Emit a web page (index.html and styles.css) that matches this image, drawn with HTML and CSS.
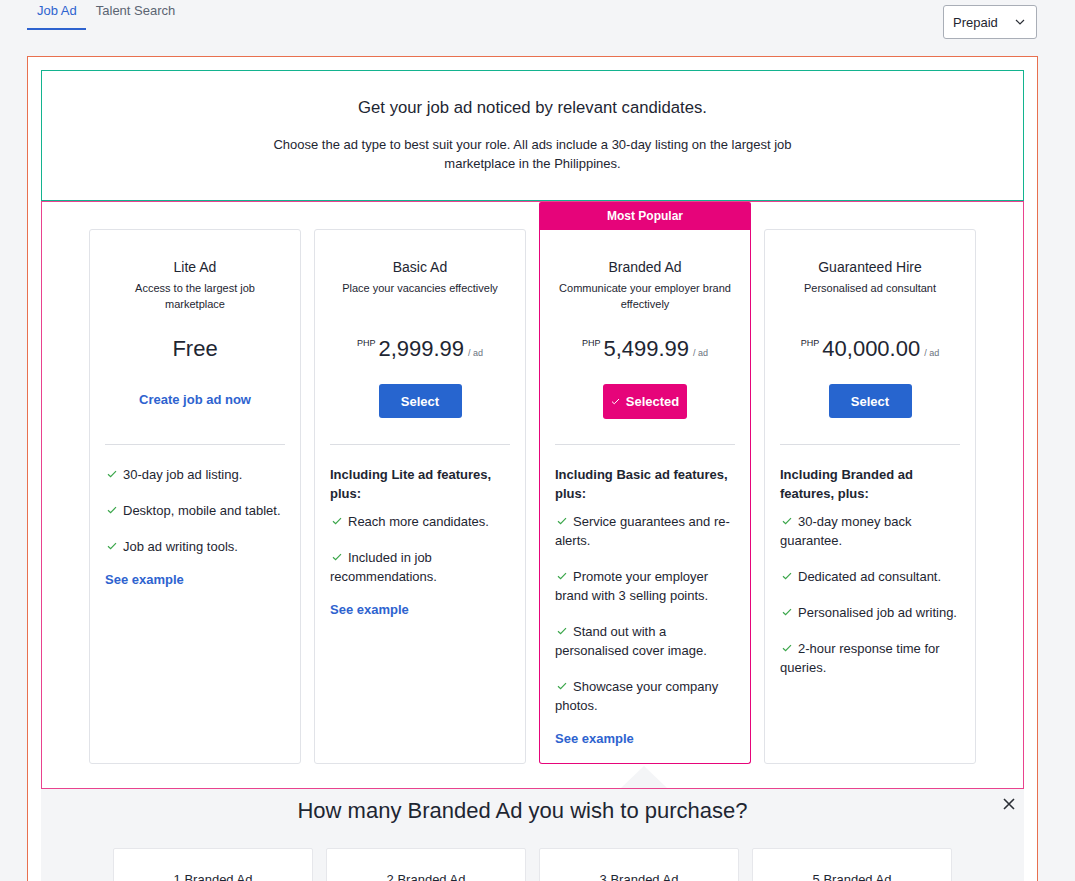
FILE: index.html
```html
<!DOCTYPE html>
<html lang="en">
<head>
<meta charset="utf-8">
<title>Job Ad</title>
<link rel="stylesheet" href="styles.css">
</head>
<body>
<header class="topbar">
  <nav class="tabs">
    <a class="tab tab-active">Job Ad</a>
    <a class="tab">Talent Search</a>
  </nav>
  <div class="select">
    <span>Prepaid</span>
    <svg class="chev" width="10" height="6" viewBox="0 0 10 6"><polyline points="1,1 5,5 9,1" fill="none" stroke="#2b2f36" stroke-width="1.2"/></svg>
  </div>
</header>

<main class="outer">
  <section class="intro">
    <h1 class="intro-title">Get your job ad noticed by relevant candidates.</h1>
    <p class="intro-text">Choose the ad type to best suit your role. All ads include a 30-day listing on the largest job marketplace in the Philippines.</p>
  </section>

  <section class="plans">
    <div class="plan-row">
      <div class="plan">
        <div class="plan-spacer"></div>
        <div class="card">
          <div class="card-head">
            <h2 class="plan-name">Lite Ad</h2>
            <p class="plan-desc">Access to the largest job marketplace</p>
          </div>
          <div class="price"><span class="amt">Free</span></div>
          <div class="action"><a class="create">Create job ad now</a></div>
          <div class="divider"></div>
          <ul class="features">
            <li><svg class="tick" width="10" height="8" viewBox="0 0 10 8"><polyline points="1,4.2 3.6,6.6 9,1.2" fill="none" stroke="#3aa64a" stroke-width="1.2"/></svg>30-day job ad listing.</li>
            <li><svg class="tick" width="10" height="8" viewBox="0 0 10 8"><polyline points="1,4.2 3.6,6.6 9,1.2" fill="none" stroke="#3aa64a" stroke-width="1.2"/></svg>Desktop, mobile and tablet.</li>
            <li><svg class="tick" width="10" height="8" viewBox="0 0 10 8"><polyline points="1,4.2 3.6,6.6 9,1.2" fill="none" stroke="#3aa64a" stroke-width="1.2"/></svg>Job ad writing tools.</li>
          </ul>
          <a class="example">See example</a>
        </div>
      </div>

      <div class="plan">
        <div class="plan-spacer"></div>
        <div class="card">
          <div class="card-head">
            <h2 class="plan-name">Basic Ad</h2>
            <p class="plan-desc">Place your vacancies effectively</p>
          </div>
          <div class="price"><span class="cur">PHP</span><span class="amt">2,999.99</span><span class="per">/ ad</span></div>
          <div class="action"><button class="btn btn-blue">Select</button></div>
          <div class="divider"></div>
          <p class="feat-head">Including Lite ad features, plus:</p>
          <ul class="features">
            <li><svg class="tick" width="10" height="8" viewBox="0 0 10 8"><polyline points="1,4.2 3.6,6.6 9,1.2" fill="none" stroke="#3aa64a" stroke-width="1.2"/></svg>Reach more candidates.</li>
            <li><svg class="tick" width="10" height="8" viewBox="0 0 10 8"><polyline points="1,4.2 3.6,6.6 9,1.2" fill="none" stroke="#3aa64a" stroke-width="1.2"/></svg>Included in job recommendations.</li>
          </ul>
          <a class="example">See example</a>
        </div>
      </div>

      <div class="plan plan-featured">
        <div class="ribbon">Most Popular</div>
        <div class="card card-featured">
          <div class="card-head">
            <h2 class="plan-name">Branded Ad</h2>
            <p class="plan-desc">Communicate your employer brand effectively</p>
          </div>
          <div class="price"><span class="cur">PHP</span><span class="amt">5,499.99</span><span class="per">/ ad</span></div>
          <div class="action"><button class="btn btn-pink"><svg class="btn-tick" width="9" height="7" viewBox="0 0 9 7"><polyline points="1,3.6 3.3,5.8 8,1" fill="none" stroke="#ffffff" stroke-width="1"/></svg>Selected</button></div>
          <div class="divider"></div>
          <p class="feat-head">Including Basic ad features, plus:</p>
          <ul class="features">
            <li><svg class="tick" width="10" height="8" viewBox="0 0 10 8"><polyline points="1,4.2 3.6,6.6 9,1.2" fill="none" stroke="#3aa64a" stroke-width="1.2"/></svg>Service guarantees and re-alerts.</li>
            <li><svg class="tick" width="10" height="8" viewBox="0 0 10 8"><polyline points="1,4.2 3.6,6.6 9,1.2" fill="none" stroke="#3aa64a" stroke-width="1.2"/></svg>Promote your employer brand with 3 selling points.</li>
            <li><svg class="tick" width="10" height="8" viewBox="0 0 10 8"><polyline points="1,4.2 3.6,6.6 9,1.2" fill="none" stroke="#3aa64a" stroke-width="1.2"/></svg>Stand out with a personalised cover image.</li>
            <li><svg class="tick" width="10" height="8" viewBox="0 0 10 8"><polyline points="1,4.2 3.6,6.6 9,1.2" fill="none" stroke="#3aa64a" stroke-width="1.2"/></svg>Showcase your company photos.</li>
          </ul>
          <a class="example">See example</a>
        </div>
      </div>

      <div class="plan">
        <div class="plan-spacer"></div>
        <div class="card">
          <div class="card-head">
            <h2 class="plan-name">Guaranteed Hire</h2>
            <p class="plan-desc">Personalised ad consultant</p>
          </div>
          <div class="price"><span class="cur">PHP</span><span class="amt">40,000.00</span><span class="per">/ ad</span></div>
          <div class="action"><button class="btn btn-blue">Select</button></div>
          <div class="divider"></div>
          <p class="feat-head">Including Branded ad features, plus:</p>
          <ul class="features">
            <li><svg class="tick" width="10" height="8" viewBox="0 0 10 8"><polyline points="1,4.2 3.6,6.6 9,1.2" fill="none" stroke="#3aa64a" stroke-width="1.2"/></svg>30-day money back guarantee.</li>
            <li><svg class="tick" width="10" height="8" viewBox="0 0 10 8"><polyline points="1,4.2 3.6,6.6 9,1.2" fill="none" stroke="#3aa64a" stroke-width="1.2"/></svg>Dedicated ad consultant.</li>
            <li><svg class="tick" width="10" height="8" viewBox="0 0 10 8"><polyline points="1,4.2 3.6,6.6 9,1.2" fill="none" stroke="#3aa64a" stroke-width="1.2"/></svg>Personalised job ad writing.</li>
            <li><svg class="tick" width="10" height="8" viewBox="0 0 10 8"><polyline points="1,4.2 3.6,6.6 9,1.2" fill="none" stroke="#3aa64a" stroke-width="1.2"/></svg>2-hour response time for queries.</li>
          </ul>
        </div>
      </div>
    </div>
  </section>

  <section class="purchase">
    <h2 class="purchase-title">How many Branded Ad you wish to purchase?</h2>
    <button class="close" aria-label="Close"><svg width="12" height="12" viewBox="0 0 12 12"><path d="M1 1 L11 11 M11 1 L1 11" stroke="#2b2f36" stroke-width="1.6" fill="none"/></svg></button>
    <div class="qty-row">
      <div class="qty-card">1 Branded Ad</div>
      <div class="qty-card">2 Branded Ad</div>
      <div class="qty-card">3 Branded Ad</div>
      <div class="qty-card">5 Branded Ad</div>
    </div>
  </section>
</main>
</body>
</html>
```

FILE: styles.css
```css
* { box-sizing: border-box; }

body {
  margin: 0;
  background: #f4f5f7;
  font-family: Arial, "Liberation Sans", sans-serif;
  color: #212a36;
}

.topbar {
  display: flex;
  justify-content: space-between;
  align-items: flex-start;
  margin: 0 38px 17px 27px;
  height: 39px;
}

.tabs { display: flex; }

.tab {
  display: block;
  font-size: 13px;
  line-height: 18px;
  padding: 2px 9px 8px 10px;
  color: #5b6472;
  border-bottom: 2px solid transparent;
}

.tab-active {
  color: #2e63cf;
  border-bottom-color: #2e63cf;
}

.select {
  margin-top: 5px;
  width: 94px;
  height: 34px;
  background: #fff;
  border: 1px solid #a9aeb7;
  border-radius: 3px;
  display: flex;
  align-items: center;
  justify-content: space-between;
  padding: 0 11px 0 9px;
  font-size: 13px;
  color: #1e2530;
}

.chev { display: block; }

.outer {
  margin-left: 27px;
  width: 1011px;
  background: #fff;
  border: 1px solid #e8704f;
  padding: 13px 13px 0;
}

.intro {
  border: 1px solid #13b38f;
  height: 131px;
  padding-top: 26px;
  text-align: center;
}

.intro-title {
  margin: 0;
  font-size: 16.7px;
  font-weight: normal;
  line-height: 22px;
  color: #1e2632;
}

.intro-text {
  margin: 16px auto 0;
  max-width: 540px;
  font-size: 13px;
  line-height: 19px;
  color: #1e2632;
}

.plans {
  border: 1px solid #e9428e;
  padding-bottom: 24px;
}

.plan-row {
  display: flex;
  justify-content: center;
  gap: 13px;
}

.plan {
  width: 212px;
  display: flex;
  flex-direction: column;
}

.plan-featured { position: relative; }

.plan-featured::after {
  content: "";
  position: absolute;
  left: 50%;
  top: calc(100% + 2px);
  margin-left: -24px;
  border-left: 23px solid transparent;
  border-right: 23px solid transparent;
  border-bottom: 22px solid #f4f5f7;
}

.plan-spacer { height: 27px; }

.ribbon {
  height: 28px;
  background: #e6047a;
  color: #fff;
  font-size: 12px;
  font-weight: bold;
  line-height: 28px;
  text-align: center;
  border-radius: 2px 2px 0 0;
}

.card {
  flex: 1;
  background: #fff;
  border: 1px solid #e1e3e8;
  border-radius: 3px;
  padding: 28px 15px 15px;
  display: flex;
  flex-direction: column;
}

.card-featured {
  border-color: #e6047a;
  border-top: 0;
  border-radius: 0 0 3px 3px;
}

.card-head {
  text-align: center;
  min-height: 54px;
}

.plan-name {
  margin: 0;
  font-size: 14px;
  font-weight: normal;
  line-height: 18px;
  color: #1e2632;
}

.plan-desc {
  margin: 4px 0 0;
  font-size: 11px;
  line-height: 16px;
  color: #1e2632;
}

.price {
  margin-top: 23px;
  text-align: center;
  line-height: 28px;
  height: 28px;
  white-space: nowrap;
}

.amt {
  font-size: 22px;
  color: #1e2632;
}

.cur {
  font-size: 9px;
  line-height: 0;
  vertical-align: 10px;
  margin-right: 3px;
  color: #1e2632;
}

.per {
  font-size: 9px;
  line-height: 0;
  color: #6b7380;
  margin-left: 4px;
}

.action {
  margin-top: 21px;
  height: 34px;
  display: flex;
  justify-content: center;
  align-items: center;
}

.create {
  font-size: 13px;
  font-weight: bold;
  color: #2e63cf;
  margin-top: -3px;
}

.btn {
  min-width: 83px;
  height: 34px;
  border: 0;
  border-radius: 3px;
  padding: 0 8px;
  color: #fff;
  font-family: Arial, "Liberation Sans", sans-serif;
  font-size: 13px;
  font-weight: bold;
  display: flex;
  align-items: center;
  justify-content: center;
}

.btn-blue { background: #2765cf; }

.btn-pink {
  background: #e6047a;
  height: 35px;
}

.btn-tick { margin-right: 6px; }

.divider {
  margin-top: 26px;
  height: 1px;
  background: #dcdee3;
  flex: none;
}

.feat-head {
  margin: 20px 0 0;
  font-size: 13px;
  font-weight: bold;
  line-height: 19px;
  color: #1e2632;
}

.features {
  list-style: none;
  margin: 20px 0 0;
  padding: 0;
}

.feat-head + .features { margin-top: 9px; }

.features li {
  font-size: 13px;
  line-height: 19px;
  color: #1e2632;
}

.features li + li { margin-top: 17px; }

.tick {
  margin: 0 6px 0 2px;
  vertical-align: 1px;
}

.example {
  margin-top: 14px;
  font-size: 13px;
  font-weight: bold;
  line-height: 19px;
  color: #2e63cf;
}

.purchase {
  position: relative;
  background: #f4f5f7;
  padding: 9px 0 40px;
}

.purchase-title {
  margin: 0;
  padding: 0 40px 0 20px;
  font-size: 22px;
  font-weight: normal;
  line-height: 26px;
  text-align: center;
  color: #1e2632;
}

.close {
  position: absolute;
  right: 9px;
  top: 9px;
  padding: 0;
  border: 0;
  background: none;
  width: 12px;
  height: 12px;
}

.close svg { display: block; }

.qty-row {
  margin-top: 24px;
  display: flex;
  justify-content: center;
  gap: 13px;
}

.qty-card {
  width: 200px;
  height: 140px;
  background: #fff;
  border: 1px solid #e6e7eb;
  border-radius: 2px;
  padding-top: 23px;
  text-align: center;
  font-size: 13px;
  color: #1e2632;
}
```
